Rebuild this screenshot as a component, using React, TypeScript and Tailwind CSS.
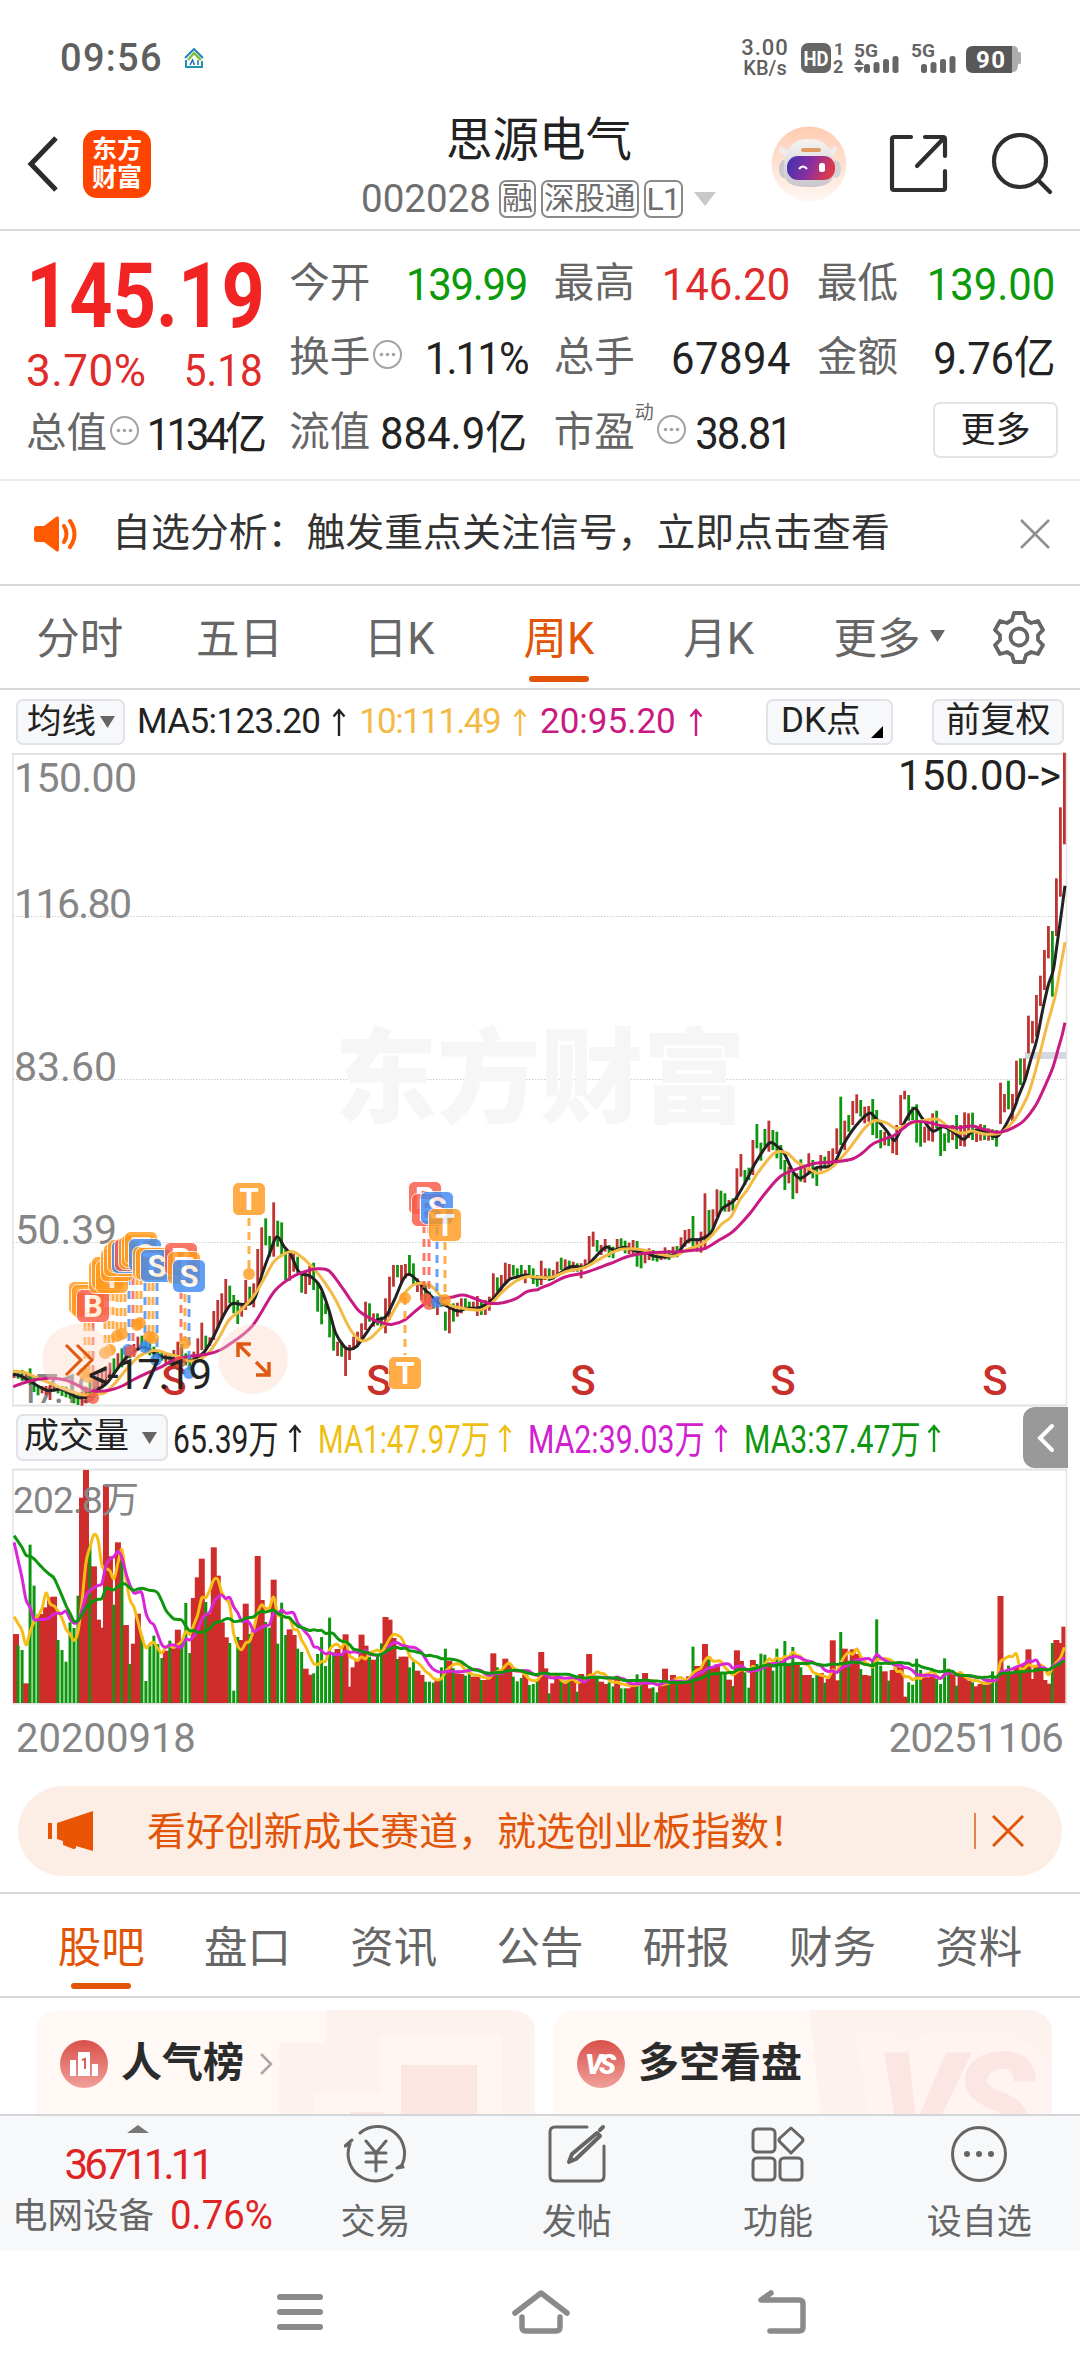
import type { ReactNode } from "react";

const RED = "#cf2d2b";
const GREEN = "#0f960f";

const UP = 1;
const DOWN = -1;

// weekly bars: direction, candle high and low (3 units per pixel), volume bar top
type Bar = [number, number, number, number];

const leftBars: Bar[] = [
  [UP, 698, 714, 700], [DOWN, 700, 716, 735], [DOWN, 690, 722, 748], [UP, 700, 726, 848],
  [DOWN, 685, 735, 432], [DOWN, 708, 756, 555], [DOWN, 735, 766, 640], [UP, 738, 760, 640],
  [UP, 738, 765, 620], [UP, 735, 780, 590], [UP, 730, 755, 588], [DOWN, 738, 760, 718],
  [DOWN, 738, 768, 748], [DOWN, 740, 772, 783], [DOWN, 750, 776, 665], [DOWN, 755, 790, 682],
  [DOWN, 762, 795, 585], [UP, 755, 797, 291], [UP, 740, 790, 208], [DOWN, 720, 772, 430],
  [UP, 700, 762, 497], [UP, 695, 750, 657], [UP, 690, 745, 681], [UP, 680, 728, 252],
  [UP, 668, 705, 467], [DOWN, 655, 702, 612], [UP, 640, 686, 425], [DOWN, 625, 682, 480],
  [UP, 622, 662, 673], [DOWN, 615, 655, 790], [UP, 612, 650, 729], [UP, 590, 632, 639],
  [DOWN, 587, 626, 708], [DOWN, 600, 636, 841], [DOWN, 610, 646, 735], [DOWN, 620, 662, 705],
  [DOWN, 630, 666, 730], [DOWN, 635, 662, 772], [UP, 640, 672, 750], [DOWN, 640, 676, 720],
  [UP, 630, 668, 730], [UP, 605, 690, 687], [DOWN, 612, 660, 720], [DOWN, 640, 676, 607],
  [DOWN, 650, 690, 757], [UP, 635, 672, 592], [UP, 595, 646, 530], [UP, 548, 630, 474],
  [DOWN, 587, 626, 604], [UP, 592, 618, 640], [UP, 513, 600, 440], [UP, 480, 565, 525],
  [UP, 460, 540, 665], [UP, 417, 515, 710], [DOWN, 437, 490, 727], [DOWN, 465, 520, 870],
  [DOWN, 480, 552, 709], [UP, 495, 530, 718], [UP, 420, 510, 609], [DOWN, 440, 490, 700],
  [UP, 430, 502, 690], [UP, 327, 450, 466], [UP, 262, 405, 598], [DOWN, 235, 316, 664],
  [DOWN, 288, 350, 681], [UP, 187, 350, 537], [DOWN, 242, 320, 729], [DOWN, 247, 350, 606],
  [DOWN, 330, 420, 703], [UP, 345, 422, 686], [UP, 340, 395, 703], [DOWN, 350, 400, 744],
  [DOWN, 395, 458, 754], [UP, 395, 462, 804], [UP, 378, 435, 822], [DOWN, 368, 450, 818],
  [DOWN, 430, 515, 760], [DOWN, 455, 553, 709], [DOWN, 490, 522, 796], [DOWN, 515, 592, 651],
  [DOWN, 560, 632, 755], [UP, 605, 648, 745], [DOWN, 610, 650, 760], [UP, 620, 708, 701],
  [UP, 615, 660, 858], [UP, 590, 630, 800], [UP, 575, 620, 780], [UP, 550, 602, 702],
  [UP, 485, 570, 735], [DOWN, 490, 545, 768], [UP, 520, 560, 777], [DOWN, 520, 556, 760],
  [DOWN, 530, 562, 728], [UP, 475, 580, 649], [UP, 410, 540, 657], [UP, 375, 440, 712],
  [DOWN, 375, 412, 775], [UP, 375, 428, 768], [UP, 372, 415, 768], [DOWN, 345, 408, 800],
  [DOWN, 370, 435, 783], [UP, 415, 456, 810], [UP, 425, 480, 823], [DOWN, 430, 495, 843],
  [DOWN, 455, 500, 843], [DOWN, 470, 506, 846], [UP, 475, 525, 835], [DOWN, 465, 500, 800],
  [DOWN, 515, 572, 744], [UP, 500, 580, 780], [DOWN, 490, 545, 803], [UP, 488, 530, 818],
  [UP, 475, 520, 820], [DOWN, 475, 510, 825], [DOWN, 485, 512, 818], [UP, 485, 512, 828],
  [UP, 468, 528, 828], [DOWN, 480, 525, 838], [UP, 480, 525, 838], [UP, 470, 512, 830],
  [UP, 400, 490, 758], [DOWN, 412, 455, 800], [UP, 405, 455, 815], [UP, 368, 430, 774],
  [UP, 372, 415, 790], [DOWN, 375, 407, 828], [DOWN, 385, 410, 842], [DOWN, 375, 415, 832],
  [UP, 390, 430, 822], [DOWN, 375, 410, 853], [DOWN, 385, 432, 850], [DOWN, 405, 440, 838],
];

// highs and lows below start 90px above the ones of the left half
const rightBars: Bar[] = [
  [UP, 632, 705, 754], [UP, 655, 690, 803], [DOWN, 655, 693, 878], [UP, 660, 688, 848],
  [UP, 635, 672, 825], [DOWN, 623, 660, 840], [UP, 628, 662, 840], [DOWN, 632, 662, 840],
  [UP, 635, 665, 835], [DOWN, 640, 665, 873], [UP, 640, 685, 820], [UP, 628, 655, 835],
  [UP, 558, 640, 760], [UP, 545, 590, 825], [DOWN, 570, 605, 828], [UP, 585, 615, 843],
  [UP, 567, 605, 850], [DOWN, 585, 622, 845], [DOWN, 590, 625, 857], [UP, 567, 605, 830],
  [DOWN, 565, 600, 863], [DOWN, 572, 610, 863], [UP, 578, 612, 863], [UP, 570, 615, 855],
  [DOWN, 573, 650, 821], [DOWN, 610, 655, 843], [UP, 600, 640, 817], [UP, 595, 630, 863],
  [DOWN, 600, 632, 860], [DOWN, 605, 635, 875], [UP, 605, 630, 850], [UP, 592, 628, 804],
  [DOWN, 600, 630, 848], [UP, 590, 622, 823], [DOWN, 588, 622, 840], [UP, 562, 602, 838],
  [UP, 540, 590, 842], [UP, 537, 580, 827], [DOWN, 498, 590, 738], [UP, 565, 605, 796],
  [UP, 545, 608, 805], [UP, 430, 600, 730], [DOWN, 480, 560, 776], [UP, 478, 535, 800],
  [UP, 418, 500, 792], [DOWN, 422, 480, 815], [DOWN, 430, 485, 815], [UP, 450, 485, 837],
  [DOWN, 445, 482, 856], [UP, 355, 450, 749], [UP, 312, 380, 781], [DOWN, 360, 405, 815],
  [DOWN, 353, 390, 861], [UP, 270, 375, 778], [DOWN, 222, 295, 790], [DOWN, 278, 332, 759],
  [DOWN, 237, 290, 762], [UP, 212, 305, 785], [DOWN, 240, 300, 810], [DOWN, 245, 325, 744],
  [DOWN, 285, 358, 780], [DOWN, 330, 420, 721], [UP, 350, 400, 790], [DOWN, 370, 447, 739],
  [UP, 370, 430, 790], [DOWN, 328, 395, 800], [UP, 350, 398, 823], [UP, 310, 372, 823],
  [DOWN, 330, 385, 832], [DOWN, 350, 408, 820], [UP, 315, 362, 817], [DOWN, 320, 355, 846],
  [UP, 303, 345, 835], [UP, 295, 345, 719], [UP, 235, 312, 839], [DOWN, 140, 285, 694],
  [UP, 212, 300, 744], [DOWN, 195, 245, 780], [UP, 153, 225, 746], [UP, 133, 190, 760],
  [DOWN, 150, 200, 805], [UP, 170, 220, 823], [UP, 168, 215, 825], [DOWN, 147, 255, 780],
  [DOWN, 180, 265, 656], [DOWN, 240, 295, 795], [UP, 245, 286, 812], [DOWN, 250, 288, 840],
  [UP, 255, 310, 808], [UP, 225, 315, 800], [UP, 135, 225, 800], [UP, 122, 148, 888],
  [DOWN, 135, 212, 845], [DOWN, 170, 210, 852], [DOWN, 163, 278, 774], [DOWN, 215, 290, 808],
  [UP, 230, 278, 830], [UP, 228, 272, 830], [UP, 190, 275, 820], [DOWN, 182, 235, 835],
  [DOWN, 235, 318, 850], [DOWN, 250, 303, 773], [DOWN, 230, 278, 804], [UP, 225, 270, 820],
  [DOWN, 195, 297, 855], [UP, 225, 288, 825], [UP, 187, 290, 830], [UP, 190, 264, 840],
  [DOWN, 188, 270, 845], [UP, 230, 276, 857], [UP, 222, 272, 850], [DOWN, 225, 270, 850],
  [UP, 235, 272, 835], [DOWN, 238, 270, 812], [DOWN, 240, 290, 835], [UP, 98, 222, 586],
  [UP, 132, 187, 808], [DOWN, 92, 178, 795], [UP, 132, 215, 815], [UP, 32, 155, 800],
  [DOWN, 25, 105, 812], [UP, 25, 90, 790], [UP, -103, 10, 746], [UP, -87, -20, 835],
  [UP, -165, -40, 795], [UP, -223, -132, 795], [UP, -300, -180, 838], [UP, -372, -275, 849],
  [DOWN, -357, -160, 727], [UP, -515, -342, 718], [UP, -728, -460, 727], [UP, -892, -617, 678],
];

const STEP = 3.9935;
const barX = (i: number) => 14.1 + i * STEP;

const candles = [
  ...leftBars.map(([dir, hi, lo]) => ({ dir, hi: 387 + hi / 3, lo: 387 + lo / 3 })),
  ...rightBars.map(([dir, hi, lo]) => ({ dir, hi: 297 + hi / 3, lo: 297 + lo / 3 })),
];

const volumes = [...leftBars, ...rightBars].map(([dir, , , top]) => ({ dir, h: (907 - top) / 3 }));

// ten-, five- and four-week stretches before the first visible bar
const volumeHistory = [
  ...Array<number>(10).fill(174),
  ...Array<number>(5).fill(235),
  ...Array<number>(4).fill(90.5),
];

function movingAverage(size: number) {
  const all = [...volumeHistory, ...volumes.map((v) => v.h)];
  return volumes.map((_, i) => {
    const end = i + volumeHistory.length + 1;
    const win = all.slice(end - size, end);
    return [barX(i), 235 - win.reduce((a, b) => a + b, 0) / size];
  });
}

function smooth(points: number[][]) {
  let d = `M${points[0][0].toFixed(1)} ${points[0][1].toFixed(1)}`;
  for (let i = 0; i < points.length - 1; i++) {
    const p0 = points[Math.max(i - 1, 0)];
    const p1 = points[i];
    const p2 = points[i + 1];
    const p3 = points[Math.min(i + 2, points.length - 1)];
    const c = [
      p1[0] + (p2[0] - p0[0]) / 6,
      p1[1] + (p2[1] - p0[1]) / 6,
      p2[0] - (p3[0] - p1[0]) / 6,
      p2[1] - (p3[1] - p1[1]) / 6,
      p2[0],
      p2[1],
    ];
    d += `C${c.map((n) => n.toFixed(1)).join(" ")}`;
  }
  return d;
}

function section(ox: number, oy: number, sx: number, flat: number[]) {
  const out: number[][] = [];
  for (let i = 0; i < flat.length; i += 2) out.push([ox + flat[i] / sx, oy + flat[i + 1] / 3]);
  return out;
}
const left = (p: number[]) => section(0, 387, 2.904, p);
const right = (p: number[]) => section(540, 297, 2.904, p);
const tail = (p: number[]) => section(860, -13, 3, p);

const ma5 = smooth([
  ...left([
    38, 703, 60, 708, 85, 722, 110, 738, 140, 752, 175, 748, 205, 762, 230, 773, 262, 768, 290, 745,
    310, 730, 335, 695, 365, 655, 395, 630, 420, 622, 450, 640, 475, 652, 500, 655, 520, 662, 545, 662,
    565, 658, 592, 637, 620, 590, 650, 525, 672, 492, 700, 493, 725, 492, 742, 470, 762, 400, 785, 335,
    804, 290, 825, 320, 845, 345, 862, 385, 875, 402, 900, 408, 930, 440, 955, 510, 975, 580, 1000, 620,
    1015, 628, 1035, 620, 1060, 585, 1090, 543, 1120, 530, 1145, 480, 1170, 420, 1187, 403, 1210, 420,
    1240, 455, 1270, 485, 1295, 497, 1320, 510, 1335, 513, 1355, 505, 1380, 505, 1400, 500, 1430, 478,
    1455, 445, 1480, 418, 1505, 410, 1530, 405, 1545, 412,
  ]),
  ...right([
    0, 685, 20, 682, 35, 685, 60, 668, 90, 650, 130, 650, 160, 622, 190, 592, 215, 600, 245, 592,
    275, 602, 310, 608, 330, 618, 370, 620, 400, 608, 430, 572, 465, 568, 495, 550, 515, 505, 530, 475,
    565, 450, 600, 390, 625, 340, 665, 280, 690, 290, 710, 312, 735, 365, 755, 385, 780, 370, 805, 352,
    850, 345, 880, 285, 915, 230, 955, 190, 975, 205, 1005, 240, 1025, 268, 1035, 265, 1065, 205,
    1088, 175, 1110, 205, 1140, 243, 1170, 230, 1200, 245, 1230, 268, 1255, 245, 1290, 243, 1330, 258,
  ]),
  ...tail([
    458, 1115, 475, 1070, 495, 1020, 512, 960, 530, 900, 550, 800, 565, 735, 580, 690, 590, 620,
    600, 550, 615, 437,
  ]),
]);

const ma10 = smooth([
  ...left([
    38, 693, 70, 697, 105, 712, 135, 725, 170, 740, 210, 755, 245, 765, 280, 762, 305, 758, 335, 728,
    365, 690, 400, 652, 430, 635, 460, 632, 490, 643, 520, 650, 545, 662, 575, 660, 605, 640, 635, 595,
    665, 540, 700, 510, 735, 470, 765, 420, 795, 365, 825, 342, 850, 335, 875, 350, 910, 385, 945, 430,
    975, 480, 1005, 545, 1025, 580, 1050, 602, 1075, 595, 1100, 570, 1125, 545, 1150, 500, 1175, 460,
    1200, 435, 1225, 430, 1255, 440, 1285, 475, 1310, 497, 1345, 505, 1395, 510, 1425, 492, 1460, 455,
    1495, 425, 1530, 410, 1560, 412,
  ]),
  ...right([
    0, 682, 35, 682, 75, 665, 130, 652, 165, 632, 205, 610, 235, 598, 275, 597, 310, 602, 345, 612,
    390, 618, 425, 600, 470, 582, 500, 555, 530, 520, 555, 500, 580, 450, 605, 415, 635, 365, 680, 310,
    715, 308, 745, 335, 780, 355, 810, 370, 850, 350, 895, 300, 940, 238, 970, 212, 1005, 218,
    1035, 235, 1075, 220, 1110, 212, 1155, 208, 1190, 235, 1225, 250, 1255, 243, 1290, 252, 1335, 250,
    1365, 225, 1390, 190, 1415, 140,
  ]),
  ...tail([520, 1015, 540, 940, 560, 860, 585, 770, 600, 690, 615, 607]),
]);

const ma20 = smooth([
  ...left([
    38, 740, 70, 728, 110, 718, 150, 715, 190, 720, 220, 733, 250, 748, 285, 754, 320, 750, 355, 738,
    390, 718, 430, 698, 470, 680, 505, 660, 545, 650, 600, 643, 640, 630, 680, 603, 710, 580, 735, 555,
    760, 515, 800, 450, 850, 410, 900, 390, 925, 386, 955, 392, 985, 430, 1015, 475, 1045, 515,
    1085, 540, 1115, 550, 1140, 553, 1175, 540, 1210, 510, 1240, 488, 1270, 478, 1310, 472, 1345, 465,
    1385, 478, 1420, 490, 1460, 488, 1500, 475, 1530, 455, 1560, 449,
  ]),
  ...right([
    0, 715, 35, 700, 75, 680, 130, 668, 200, 642, 260, 618, 320, 608, 400, 605, 450, 600, 480, 595,
    520, 570, 560, 545, 610, 490, 650, 435, 700, 378, 760, 352, 800, 340, 850, 336, 905, 328, 935, 310,
    970, 280, 1030, 255, 1055, 235, 1085, 215, 1130, 218, 1170, 228, 1215, 233, 1255, 228, 1290, 238,
    1330, 247, 1370, 235, 1405, 212, 1440, 165, 1470, 100, 1490, 50,
  ]),
  ...tail([595, 925, 605, 890, 615, 848]),
]);

const TRADE = { T: "#ff9a1f", S: "#3f8af5", B: "#fa5a46" };
type TradeKind = keyof typeof TRADE;

// dashed leaders: x, from, to
const leaders: [TradeKind, number, number, number][] = [
  ["T", 85, 570, 618], ["T", 89, 570, 620], ["B", 93, 570, 640], ["T", 105, 540, 595],
  ["T", 109, 540, 595], ["T", 113, 540, 594], ["T", 117, 541, 580], ["T", 121, 541, 580],
  ["T", 125, 541, 580], ["S", 129, 524, 590], ["B", 133, 524, 590], ["T", 137, 524, 570],
  ["T", 141, 524, 568], ["S", 145, 530, 590], ["T", 149, 530, 582], ["T", 153, 530, 582],
  ["S", 157, 530, 604], ["B", 181, 538, 606], ["T", 185, 541, 588], ["S", 189, 542, 616],
  ["T", 249, 465, 520], ["B", 424, 472, 535], ["B", 429, 472, 545], ["S", 437, 474, 545],
  ["T", 445, 489, 545], ["T", 405, 544, 602],
];

const dots: [TradeKind, number, number][] = [
  ["T", 84, 620], ["T", 88, 624], ["B", 93, 645], ["T", 105, 600], ["T", 110, 597],
  ["T", 117, 583], ["T", 122, 581], ["T", 137, 572], ["T", 140, 570], ["T", 149, 584],
  ["T", 153, 585], ["S", 128, 597], ["B", 131, 598], ["S", 145, 594], ["S", 156, 607],
  ["B", 180, 609], ["T", 185, 590], ["S", 189, 620], ["T", 249, 521], ["B", 426, 546],
  ["B", 429, 551], ["S", 437, 549], ["T", 445, 547], ["T", 405, 545],
];

const badges: [TradeKind, number, number][] = [
  ["T", 85, 545], ["T", 88, 548], ["B", 93, 553], ["T", 105, 524], ["T", 108, 520],
  ["T", 112, 524], ["T", 117, 512], ["T", 120, 507], ["T", 124, 503], ["S", 128, 504],
  ["B", 131, 502], ["T", 135, 500], ["T", 138, 498], ["T", 141, 495], ["S", 145, 502],
  ["T", 149, 510], ["T", 152, 511], ["S", 157, 513], ["B", 181, 506], ["T", 184, 515],
  ["S", 189, 523], ["T", 249, 446], ["B", 425, 445], ["B", 428, 457], ["S", 437, 455],
  ["T", 445, 472], ["T", 405, 620],
];

function PriceChart() {
  return (
    <svg width="1080" height="654" viewBox="0 0 1080 654" className="block overflow-visible">
      <g fill="none" stroke="#e2e2e2" strokeWidth="2">
        <path d="M12 1H1067M12 652.5H1067" />
        <path d="M13 1V652M1066.5 1V652" strokeWidth="1.5" />
      </g>
      <path
        d="M13 163.5H1066M13 326.5H1066M13 489.5H1066"
        stroke="#cfcfcf"
        strokeWidth="1"
        strokeDasharray="1.5 1.5"
      />
      <text x="334" y="362" textLength="412" className="text-[103px] font-black" fill="#f6f6f6">
        东方财富
      </text>
      <rect x="1025" y="299" width="41" height="7" fill="#d5d8de" />

      <g className="text-[41px]" fill="#868686">
        <text x="14" y="39" textLength="123">150.00</text>
        <text x="14" y="165" textLength="118">116.80</text>
        <text x="14" y="328" textLength="103">83.60</text>
        <text x="15" y="491" textLength="102">50.39</text>
        <text x="18" y="650" textLength="82">17.19</text>
      </g>

      {candles.map((c, i) => (
        <rect
          key={i}
          x={barX(i) - 1.4}
          y={c.hi}
          width="2.8"
          height={c.lo - c.hi}
          fill={c.dir === UP ? "#bf3432" : GREEN}
        />
      ))}

      <g fill="none" strokeWidth="3" strokeLinejoin="round">
        <path d={ma5} stroke="#222" />
        <path d={ma10} stroke="#f3bb45" />
        <path d={ma20} stroke="#c81a82" />
      </g>

      <g className="text-[42px] font-medium" fill="#c9302c" textAnchor="middle">
        <text x="174" y="642">S</text>
        <text x="379" y="642">S</text>
        <text x="583" y="642">S</text>
        <text x="783" y="642">S</text>
        <text x="995" y="642">S</text>
      </g>

      {leaders.map(([kind, x, y1, y2], i) => (
        <path
          key={i}
          d={`M${x} ${y1}V${y2}`}
          stroke={TRADE[kind]}
          strokeOpacity="0.8"
          strokeWidth="3"
          strokeDasharray="8 6"
        />
      ))}
      {dots.map(([kind, x, y], i) => (
        <circle key={i} cx={x} cy={y} r="6" fill={TRADE[kind]} fillOpacity="0.8" />
      ))}
      {badges.map(([kind, x, y], i) => (
        <g key={i} opacity="0.82">
          <rect
            x={x - 16.5}
            y={y - 16.5}
            width="33"
            height="33"
            rx="6"
            fill={TRADE[kind]}
            stroke="#fff"
            strokeWidth="1"
          />
          <text x={x} y={y + 11} textAnchor="middle" className="text-[31px] font-bold" fill="#fff">
            {kind}
          </text>
        </g>
      ))}

      <circle cx="77" cy="606" r="35" fill="#fdd9c8" fillOpacity="0.4" />
      <circle cx="253" cy="606" r="35" fill="#fdd9c8" fillOpacity="0.4" />
      <g fill="none" stroke="#e05a12" strokeWidth="3">
        <path d="M66 592l15 15-15 15M77 592l15 15-15 15" />
        <path d="M238 604v-13h13M239 592l11 11M256 622h13v-13M268 621l-12-12" strokeWidth="3.5" />
      </g>

      <g className="text-[42px]" fill="#222">
        <text x="898" y="37" textLength="163">150.00-&gt;</text>
        <text x="88" y="636" textLength="124">&lt;-17.19</text>
      </g>
    </svg>
  );
}

function VolumeChart() {
  return (
    <svg width="1080" height="238" viewBox="0 0 1080 238" className="block">
      <g fill="none" stroke="#e2e2e2" strokeWidth="2">
        <path d="M12 1.5H1067M12 235.5H1067" />
        <path d="M13 1V235M1066.5 1V235" strokeWidth="1.5" />
      </g>
      {volumes.map((v, i) => (
        <rect
          key={i}
          x={Math.max(barX(i) - (v.dir === UP ? 3 : 1.5), 13)}
          y={235 - v.h}
          width={i === volumes.length - 1 ? 4 : v.dir === UP ? 6 : 3}
          height={v.h}
          fill={v.dir === UP ? RED : GREEN}
        />
      ))}
      <text x="13" y="45" textLength="126" className="text-[37px]" fill="#868686">
        202.8万
      </text>
      <g fill="none" strokeWidth="3" strokeLinejoin="round">
        <path d={smooth(movingAverage(5))} stroke="#f6bd16" />
        <path d={smooth(movingAverage(10))} stroke="#d827d8" />
        <path d={smooth(movingAverage(20))} stroke={GREEN} />
      </g>
    </svg>
  );
}

function Arrow() {
  return (
    <svg width="14" height="28" viewBox="0 0 14 28" fill="none" stroke="currentColor" strokeWidth="2.4">
      <path d="M7 28V2M1.5 8.5 7 2l5.5 6.5" />
    </svg>
  );
}

function Triangle({ className }: { className: string }) {
  return (
    <svg viewBox="0 0 14 12" preserveAspectRatio="none" className={className} fill="currentColor">
      <path d="M0 0h14L7 12z" />
    </svg>
  );
}

function Info() {
  return (
    <svg width="31" height="31" viewBox="0 0 31 31" className="mb-1.5 ml-0.5 shrink-0">
      <circle cx="15.5" cy="15.5" r="13.5" fill="none" stroke="#a3a3a3" strokeWidth="2" />
      <g fill="#a3a3a3">
        <circle cx="9.5" cy="15.5" r="1.8" />
        <circle cx="15.5" cy="15.5" r="1.8" />
        <circle cx="21.5" cy="15.5" r="1.8" />
      </g>
    </svg>
  );
}

function Quote({ label, children }: { label: ReactNode; children: ReactNode }) {
  return (
    <div className="flex h-[74.5px] items-center justify-between whitespace-nowrap">
      <span className="flex items-center text-[40.5px] text-[#666]">{label}</span>
      {children}
    </div>
  );
}

function Value({ className, children }: { className: string; children: ReactNode }) {
  return (
    <span className={`flex w-0 justify-end pt-0.5 text-[45px] ${className}`}>
      <span className="inline-block origin-right scale-x-[.93]">{children}</span>
    </span>
  );
}

function Signal() {
  return (
    <g>
      <rect x="0" y="20" width="6" height="9" rx="2.5" />
      <rect x="9.5" y="18" width="6" height="11" rx="2.5" />
      <rect x="19" y="15" width="6" height="14" rx="2.5" />
      <rect x="28.5" y="12" width="6" height="17" rx="2.5" />
    </g>
  );
}

function StatusBar() {
  return (
    <div className="flex h-[116px] items-center pl-[60px] text-[#5f5f5f]">
      <span className="w-[104px] text-[38px] font-medium tracking-[1.3px]">09:56</span>
      <svg width="20" height="20" viewBox="0 0 20 20" className="ml-5" fill="none" strokeWidth="2">
        <path d="M1 10 10 1l9 9" stroke="#1f83c4" />
        <path d="M4 12 10 5l7 7" stroke="#7fbf3a" strokeWidth="2.5" />
        <path d="M2 12v7h16v-6" stroke="#1f93b4" />
        <path d="M6 17l2.5-5 2 5M14 12v5" stroke="#1b6fb0" strokeWidth="1.5" />
      </svg>
      <div className="ml-[536px] flex w-[50px] flex-col items-center leading-[20px]">
        <span className="text-[22px] font-medium tracking-[1px]">3.00</span>
        <span className="text-[20px] font-medium">KB/s</span>
      </div>
      <svg width="232" height="36" viewBox="0 0 232 36" className="ml-[9px]" fill="#666">
        <rect x="2" y="3" width="30" height="30" rx="7" />
        <g className="font-bold">
          <text x="4.5" y="25.5" textLength="25" lengthAdjust="spacingAndGlyphs" className="text-[21px]" fill="#fff">
            HD
          </text>
          <text x="35" y="15" className="text-[17px]">1</text>
          <text x="34" y="33" className="text-[18px]">2</text>
          <text x="55" y="17" textLength="24" lengthAdjust="spacingAndGlyphs" className="text-[19px]">5G</text>
          <text x="112" y="17" textLength="24" lengthAdjust="spacingAndGlyphs" className="text-[19px]">5G</text>
        </g>
        <path d="M55 25l5-6 5 6zM55 27l5 6 5-6z" />
        <g transform="translate(65 4)">
          <Signal />
        </g>
        <g transform="translate(122 4)">
          <Signal />
        </g>
        <path d="M210 6h5q4 0 4 6h2q1 0 1 2v8q0 2-1 2h-2q0 8-5 8h-5z" fill="#adadad" />
        <path d="M174 6h39v27h-39q-7 0-7-7V13q0-7 7-7z" fill="#585858" />
        <text x="177" y="28" textLength="29" className="text-[24px] font-bold" fill="#fff">
          90
        </text>
      </svg>
    </div>
  );
}

function Robot() {
  return (
    <svg width="76" height="76" viewBox="0 0 76 76">
      <defs>
        <linearGradient id="halo" x1="0" y1="0" x2="0" y2="1">
          <stop offset="0" stopColor="#ffcbb0" />
          <stop offset="1" stopColor="#fff8f5" />
        </linearGradient>
        <linearGradient id="visor" x1="0" y1="0" x2="1" y2="0.2">
          <stop offset="0" stopColor="#3a34b0" />
          <stop offset="0.55" stopColor="#8a2f9e" />
          <stop offset="1" stopColor="#dc3a4c" />
        </linearGradient>
        <linearGradient id="shell" x1="0" y1="0" x2="0" y2="1">
          <stop offset="0" stopColor="#f7f4f4" />
          <stop offset="1" stopColor="#c9c6cc" />
        </linearGradient>
      </defs>
      <circle cx="38" cy="38" r="37.5" fill="url(#halo)" />
      <path d="M9 19q-3 8 5 11l8-6q-8 1-13-5zM65 19q3 8-5 11l-8-6q8 1 13-5z" fill="#efecee" />
      <ellipse cx="13" cy="43" rx="5" ry="9" fill="#c9c6cc" />
      <ellipse cx="65" cy="43" rx="5" ry="9" fill="#d4d1d6" />
      <path
        d="M38 13c17 0 24 11 25 27 1 14-3 21-25 21S11 54 13 40c1-16 8-27 25-27z"
        fill="url(#shell)"
      />
      <rect x="30" y="22" width="20" height="4" rx="2" fill="#e09a62" />
      <rect x="16" y="30" width="48" height="24" rx="11" fill="url(#visor)" />
      <path d="M28 43q4-5 8 0" fill="none" stroke="#fff" strokeWidth="2.2" />
      <rect x="48" y="37" width="6" height="9" rx="2.5" fill="#fff" />
    </svg>
  );
}

function Header() {
  return (
    <header className="flex h-[115px] items-center border-b-2 border-[#d9d9d9] pb-[18px]">
      <svg width="32" height="56" viewBox="0 0 32 56" className="ml-[27px]" fill="none" stroke="#2b2b2b" strokeWidth="5">
        <path d="M29 2 4 28l25 26" />
      </svg>
      <div className="ml-[24px] flex h-[68px] w-[68px] flex-col items-center justify-center rounded-[14px] bg-[#ff4400] text-[25px] font-bold leading-[28px] text-white">
        <span>东方</span>
        <span>财富</span>
      </div>
      <div className="ml-[210px] mt-[10px] flex w-[356px] flex-col items-center">
        <h1 className="text-[46.5px] leading-[60px] text-[#222]">思源电气</h1>
        <div className="flex h-[58px] w-full items-center gap-[5px] whitespace-nowrap text-[32px] leading-[34px] text-[#6e6e6e]">
          <span className="mr-0.5 w-[131px] text-[38.5px]">002028</span>
          <span className="rounded-[7px] border-2 border-[#8a8a8a] px-[1px] text-[31px]">融</span>
          <span className="rounded-[7px] border-2 border-[#8a8a8a] px-[1px] text-[30.5px]">深股通</span>
          <span className="rounded-[7px] border-2 border-[#8a8a8a] px-[1px] text-[32px] tracking-[-1px]">L1</span>
          <Triangle className="ml-1.5 h-[14px] w-[22px] text-[#c9c9c9]" />
        </div>
      </div>
      <div className="ml-[54px] flex items-center">
        <Robot />
        <svg width="60" height="60" viewBox="0 0 60 60" className="ml-[42px]" fill="none" stroke="#2f2f2f" strokeWidth="4.2" strokeLinecap="round" strokeLinejoin="round">
          <path d="M22 3H5q-2 0-2 2v49q0 2 2 2h49q2 0 2-2V37M36 3h18q2 0 2 2v17M55 4 28 32" />
        </svg>
        <svg width="62" height="62" viewBox="0 0 62 62" className="ml-[42px]" fill="none" stroke="#2f2f2f" strokeWidth="4.2" strokeLinecap="round">
          <circle cx="29" cy="28" r="26" />
          <path d="M47 47l12 12" />
        </svg>
      </div>
    </header>
  );
}

function QuotePanel() {
  return (
    <section className="flex h-[250px] justify-between border-b-2 border-[#ececec] pl-[26px] pr-[25px] pt-[15px] text-[#222]">
      <div className="w-[237px]">
        <div className="flex h-[98px] w-0 items-center pt-1 text-[90px] font-bold leading-none text-[#f12323]">
          <span className="inline-block origin-left scale-x-[.84]">145.19</span>
        </div>
        <div className="flex h-[52px] justify-between text-[44px] leading-[54px] text-[#e02b2b]">
          <span className="tracking-[.5px]">3.70%</span>
          <span className="flex w-0 justify-end">
            <span className="inline-block origin-right scale-x-[.92]">5.18</span>
          </span>
        </div>
        <Quote label={<>总值<Info /></>}>
          <Value className="tracking-[-4.2px]">1134亿</Value>
        </Quote>
      </div>
      <div className="w-[238px]">
        <Quote label="今开">
          <Value className="tracking-[-1.4px] text-[#0a9a0a]">139.99</Value>
        </Quote>
        <Quote label={<>换手<Info /></>}>
          <Value className="tracking-[-2px]">1.11%</Value>
        </Quote>
        <Quote label="流值">
          <Value className="">884.9亿</Value>
        </Quote>
      </div>
      <div className="w-[237px]">
        <Quote label="最高">
          <Value className="text-[#e02b2b]">146.20</Value>
        </Quote>
        <Quote label="总手">
          <Value className="tracking-[.5px]">67894</Value>
        </Quote>
        <Quote
          label={
            <>
              市盈
              <sup className="-mt-5 text-[19px] leading-none">动</sup>
              <Info />
            </>
          }
        >
          <Value className="tracking-[-2px]">38.81</Value>
        </Quote>
      </div>
      <div className="w-[238px]">
        <Quote label="最低">
          <Value className="text-[#0a9a0a]">139.00</Value>
        </Quote>
        <Quote label="金额">
          <Value className="tracking-[-.3px]">9.76亿</Value>
        </Quote>
        <div className="flex h-[74px] items-center justify-end">
          <button className="-mr-[3px] mt-[-4px] h-[56px] w-[125px] rounded-[7px] border-2 border-[#e3e3e3] text-[35px] leading-none">更多</button>
        </div>
      </div>
    </section>
  );
}

function Notice() {
  return (
    <div className="flex h-[105px] items-center border-b-2 border-[#d9d9d9] pt-0.5">
      <svg width="46" height="38" viewBox="0 0 46 38" className="ml-[34px]">
        <path d="M3 11h7l12-9q3-2 3 2v30q0 4-3 2l-12-9H3q-3 0-3-3V14q0-3 3-3z" fill="#ff5a00" />
        <path d="M30 11q5 8 0 16M36 6q9 13 0 26" fill="none" stroke="#ff5a00" strokeWidth="4" strokeLinecap="round" />
      </svg>
      <span className="ml-[32px] w-[790px] whitespace-nowrap text-[38.9px] text-[#333]">
        自选分析：触发重点关注信号，立即点击查看
      </span>
      <svg width="30" height="30" viewBox="0 0 30 30" className="ml-[118px]" stroke="#8f8f8f" strokeWidth="2.6">
        <path d="M1 1l28 28M29 1 1 29" />
      </svg>
    </div>
  );
}

const periods = ["分时", "五日", "日K", "周K", "月K"];

function PeriodTabs() {
  return (
    <nav className="flex h-[104px] border-b-2 border-[#d9d9d9] text-[43.5px] text-[#666]">
      {periods.map((p) => (
        <div
          key={p}
          className={`flex w-[159.7px] flex-col items-center pt-[22px] leading-[64px] ${
            p === "周K" ? "text-[#e25508]" : ""
          }`}
        >
          {p}
          {p === "周K" && <i className="mt-[4px] h-[6px] w-[60px] rounded-full bg-[#e25508]" />}
        </div>
      ))}
      <div className="flex h-[104px] items-center pl-[35px] pt-1">
        更多
        <Triangle className="ml-2.5 h-[12px] w-[15px] -translate-y-1" />
      </div>
      <svg width="54" height="54" viewBox="0 0 54 54" className="mt-[24px] ml-[47px]" fill="none" stroke="#666" strokeWidth="3.8" strokeLinejoin="round">
        <path d="M22 3h10l2 7 5 3 7-2 5 9-5 5v5l5 5-5 9-7-2-5 3-2 7H22l-2-7-5-3-7 2-5-9 5-5v-5l-5-5 5-9 7 2 5-3z" />
        <circle cx="27" cy="27" r="8.5" />
      </svg>
    </nav>
  );
}

function PriceLegend() {
  return (
    <div className="flex h-[63px] items-center text-[35px] text-[#222]">
      <div className="ml-[16px] flex h-[46px] w-[109px] items-center rounded-[7px] border-2 border-[#e1e2e8] bg-[#f7f8fa] pl-[9px] text-[34.5px]">
        均线
        <Triangle className="ml-1 h-[12px] w-[15px] text-[#666]" />
      </div>
      <span className="ml-[12px] w-[195px] whitespace-nowrap pt-0.5 tracking-[-.6px]">MA5:123.20</span>
      <Arrow />
      <span className="ml-[13px] w-[154px] whitespace-nowrap pt-0.5 tracking-[-1.6px] text-[#f3bb45]">10:111.49</span>
      <span className="text-[#f3bb45]">
        <Arrow />
      </span>
      <span className="ml-[13px] w-[149px] whitespace-nowrap pt-0.5 text-[#c81a82]">20:95.20</span>
      <span className="text-[#c81a82]">
        <Arrow />
      </span>
      <div className="ml-[63px] flex h-[46px] w-[127px] items-center rounded-[7px] border-2 border-[#e1e2e8] bg-[#f7f8fa] pl-[13px]">
        <span>DK点</span>
        <svg width="12" height="12" viewBox="0 0 12 12" className="ml-[10px] mt-5">
          <path d="M12 0v12H0z" />
        </svg>
      </div>
      <div className="ml-[39px] flex h-[46px] w-[132px] items-center justify-center rounded-[7px] border-2 border-[#e1e2e8] bg-[#f7f8fa]">
        前复权
      </div>
    </div>
  );
}

function VolumeLegend() {
  return (
    <div className="flex h-[61px] items-center whitespace-nowrap text-[38.5px] text-[#222]">
      <div className="ml-[16px] flex h-[47px] w-[152px] items-center rounded-[7px] border-2 border-[#e1e2e8] bg-[#f7f8fa] pl-[6px] text-[35px]">
        成交量
        <Triangle className="ml-[13px] h-[12px] w-[15px] text-[#666]" />
      </div>
      <span className="ml-[5px] w-[115px] pt-1">
        <span className="inline-block origin-left scale-x-[.78]">65.39万</span>
      </span>
      <Arrow />
      <span className="ml-[16px] w-[180px] pt-1 text-[#f0bf16]">
        <span className="inline-block origin-left scale-x-[.765]">MA1:47.97万</span>
      </span>
      <span className="text-[#f0bf16]">
        <Arrow />
      </span>
      <span className="ml-[16px] w-[186px] pt-1 text-[#d020d0]">
        <span className="inline-block origin-left scale-x-[.785]">MA2:39.03万</span>
      </span>
      <span className="text-[#d020d0]">
        <Arrow />
      </span>
      <span className="ml-[16px] w-[183px] pt-1 text-[#0f960f]">
        <span className="inline-block origin-left scale-x-[.785]">MA3:37.47万</span>
      </span>
      <span className="text-[#0f960f]">
        <Arrow />
      </span>
      <div className="ml-auto mr-[12px] flex h-[61px] w-[45px] items-center justify-center rounded-l-[12px] bg-[#999]">
        <svg width="18" height="30" viewBox="0 0 18 30" fill="none" stroke="#fff" strokeWidth="4" strokeLinecap="round">
          <path d="M15 3 3 15l12 12" />
        </svg>
      </div>
    </div>
  );
}

function Banner() {
  return (
    <div className="mx-[18px] flex h-[90px] items-center rounded-full bg-[#fceee5] text-[#e25508]">
      <svg width="46" height="40" viewBox="0 0 46 40" className="ml-[30px]" fill="#ea5504">
        <path d="M0 12h4v16H0zM9 12 45 0v40l-17-5v2q-2 2-5 0l-8-3v-4l-6-2z" />
      </svg>
      <span className="ml-[53px] w-[820px] pt-0.5 text-[38.9px]">看好创新成长赛道，就选创业板指数！</span>
      <i className="ml-[7px] h-[36px] w-[2px] bg-[#e9834a]" />
      <svg width="32" height="32" viewBox="0 0 32 32" className="ml-[16px]" stroke="#e25508" strokeWidth="3">
        <path d="M1 1l30 30M31 1 1 31" />
      </svg>
    </div>
  );
}

const infoTabs = ["股吧", "盘口", "资讯", "公告", "研报", "财务", "资料"];

function InfoTabs() {
  return (
    <nav className="mt-[16px] flex h-[106px] border-y-2 border-[#d9d9d9] px-7 text-[43.5px] text-[#666]">
      {infoTabs.map((t, i) => (
        <div
          key={t}
          className={`flex flex-1 flex-col items-center pt-[23px] leading-[64px] ${
            i === 0 ? "text-[#e25508]" : ""
          }`}
        >
          {t}
          {i === 0 && <i className="mt-[2px] h-[6px] w-[60px] rounded-full bg-[#e25508]" />}
        </div>
      ))}
    </nav>
  );
}

function Cards() {
  return (
    <div className="flex h-[116px] gap-[18px] overflow-hidden pl-[36px] pr-[28px] pt-[12px] text-[41px] font-bold text-[#2b2b2b]">
      <div className="relative h-[140px] w-[499px] overflow-hidden rounded-[22px] bg-[#fff8f5]">
        <svg width="499" height="104" viewBox="0 0 499 104" className="absolute">
          <path d="M290 0h209v104H243V33h47z" fill="#fef2ef" />
          <path d="M344 25h122v79H278V83h66z" fill="#fff6f2" />
          <path d="M365 55h76v49h-76zM314 102h34v4h-34z" fill="#fce6e3" />
        </svg>
        <div className="relative flex h-[108px] items-center pl-[24px]">
          <svg width="48" height="48" viewBox="0 0 48 48">
            <defs>
              <linearGradient id="disc" x1="0" y1="0" x2="0" y2="1">
                <stop offset="0" stopColor="#d9504a" />
                <stop offset="1" stopColor="#f0a09a" />
              </linearGradient>
            </defs>
            <circle cx="24" cy="24" r="24" fill="url(#disc)" />
            <path d="M10 20h6v16h-6zM18 12h12v24H18zM32 24h6v12h-6z" fill="#fff" />
            <path d="M22 20l3-1v10" fill="none" stroke="#d9605a" strokeWidth="2" />
          </svg>
          <span className="ml-[13px]">人气榜</span>
          <svg width="14" height="22" viewBox="0 0 14 22" className="ml-[15px]" fill="none" stroke="#a8a8a8" strokeWidth="2.5">
            <path d="M2 1l10 10L2 21" />
          </svg>
        </div>
      </div>
      <div className="relative h-[140px] w-[499px] overflow-hidden rounded-[22px] bg-[#fff8f5]">
        <svg width="499" height="104" viewBox="0 0 499 104" className="absolute">
          <path d="M256 0h243v104H268z" fill="#fef2ef" />
          <path d="M302 22h40l8 12 30-12h80l39 30v52H316z" fill="#fff4f1" />
          <text x="322" y="140" className="text-[136px] font-black italic" textLength="160" fill="#fce6e3">
            VS
          </text>
        </svg>
        <div className="relative flex h-[108px] items-center pl-[24px]">
          <svg width="48" height="48" viewBox="0 0 48 48">
            <circle cx="24" cy="24" r="24" fill="url(#disc)" />
            <text x="8" y="34" textLength="31" className="text-[28px] font-black italic" fill="#fff">
              VS
            </text>
          </svg>
          <span className="ml-[13px]">多空看盘</span>
        </div>
      </div>
    </div>
  );
}

function Action({ label, children }: { label: string; children: ReactNode }) {
  return (
    <div className="flex w-[201.5px] flex-col items-center pt-[8px] text-[35px] leading-[40px] text-[#666]">
      <svg
        width="64"
        height="60"
        viewBox="0 0 64 60"
        fill="none"
        stroke="#666"
        strokeWidth="3"
        strokeLinecap="round"
        strokeLinejoin="round"
      >
        {children}
      </svg>
      <span className="mt-[19px]">{label}</span>
    </div>
  );
}

function BottomBar() {
  return (
    <footer className="flex h-[137px] whitespace-nowrap border-t-2 border-[#d3d5d9] bg-[#f6f8fa]">
      <div className="flex w-[275px] flex-col items-center pt-[9px]">
        <svg width="22" height="8" viewBox="0 0 22 8" fill="#777">
          <path d="M11 0l11 8H0z" />
        </svg>
        <span className="mt-[9px] text-[42px] leading-[46px] tracking-[-3.8px] text-[#e02323]">36711.11</span>
        <div className="mt-[7px] flex w-full items-center pl-[12px] text-[35.5px] leading-[42px] text-[#666]">
          电网设备
          <span className="ml-[16px] inline-block origin-left scale-x-[.96] text-[40px] text-[#e02323]">0.76%</span>
        </div>
      </div>
      <Action label="交易">
        <path d="M16 9a27 27 0 0 1 42 32l-5 3 6-1M48 51A27 27 0 0 1 6 20l-5 2 7-6M22 17l10 12 10-12M32 29v18M22 29h20M22 38h20" />
      </Action>
      <Action label="发帖">
        <path d="M42 3H10q-5 0-5 5v44q0 5 5 5h44q5 0 5-5V22" />
        <path d="M24 38l3-8L52 9l3 3-24 23zM55 6l3-3" strokeWidth="4" />
      </Action>
      <Action label="功能">
        <rect x="7" y="5" width="22" height="23" rx="4" />
        <path d="M45 4l11 10q2 2 0 4L45 29 34 18q-2-2 0-4z" />
        <rect x="7" y="34" width="22" height="22" rx="4" />
        <rect x="34" y="34" width="22" height="22" rx="4" />
      </Action>
      <Action label="设自选">
        <circle cx="32" cy="30" r="26.5" />
        <g fill="#666" strokeWidth="0">
          <circle cx="20" cy="30" r="3" />
          <circle cx="32" cy="30" r="3" />
          <circle cx="44" cy="30" r="3" />
        </g>
      </Action>
    </footer>
  );
}

function SystemNav() {
  return (
    <div className="flex h-[125px] items-center justify-between pb-1 pl-[276px] pr-[273px] text-[#8a8a8a]">
      <svg width="48" height="44" viewBox="0 0 48 44" fill="none" stroke="currentColor" strokeWidth="6" strokeLinecap="round">
        <path d="M4 7h40M4 22h40M4 37h40" />
      </svg>
      <svg width="60" height="46" viewBox="0 0 60 46" fill="none" stroke="currentColor" strokeWidth="5.5" strokeLinecap="round" strokeLinejoin="round">
        <path d="M4 24 30 4l26 20M11 28v10q0 4 4 4h30q4 0 4-4V28" />
      </svg>
      <svg width="50" height="46" viewBox="0 0 50 46" fill="none" stroke="currentColor" strokeWidth="5.5" strokeLinecap="round" strokeLinejoin="round">
        <path d="M14 4 4 11h38q4 0 4 4v23q0 4-4 4H13" />
      </svg>
    </div>
  );
}

export default function App() {
  return (
    <div className="h-[2376px] w-[1080px] overflow-hidden bg-white font-[Roboto,'Noto_Sans_CJK_SC',sans-serif]">
      <StatusBar />
      <Header />
      <QuotePanel />
      <Notice />
      <PeriodTabs />
      <PriceLegend />
      <PriceChart />
      <VolumeLegend />
      <VolumeChart />
      <div className="flex h-[80px] items-center justify-between pb-[14px] pl-[16px] pr-[17px] text-[40px] text-[#868686]">
        <span>20200918</span>
        <span className="tracking-[-.7px]">20251106</span>
      </div>
      <Banner />
      <InfoTabs />
      <Cards />
      <BottomBar />
      <SystemNav />
    </div>
  );
}
